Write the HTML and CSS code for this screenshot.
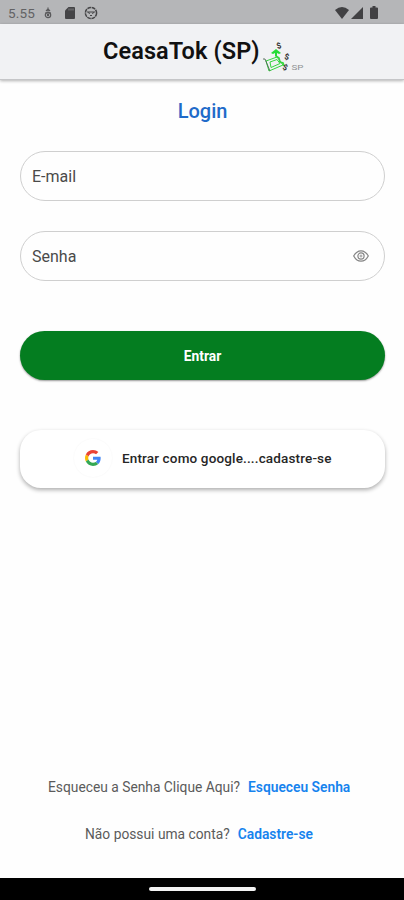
FILE: index.html
```html
<!DOCTYPE html>
<html lang="pt-BR">
<head>
<meta charset="utf-8">
<meta name="viewport" content="width=device-width">
<title>CeasaTok (SP)</title>
<link rel="stylesheet" href="styles.css">
</head>
<body>
<div class="screen">
  <div class="status">
    <span class="time">5.55</span>
    <svg class="s-bug" width="10" height="14" viewBox="0 0 10 14" fill="none" stroke="#59595b" stroke-width="1.2"><path d="M5 1.5v4M3 5l2-2 2 2M2 7h6"/><circle cx="5" cy="9" r="2.7"/><circle cx="5" cy="9" r=".6"/></svg>
    <svg class="s-card" width="10" height="12" viewBox="0 0 10 12"><path fill="#444446" d="M3.5 0H9a1 1 0 0 1 1 1v10a1 1 0 0 1-1 1H1a1 1 0 0 1-1-1V3.500z"/><path stroke="#8a8a8c" stroke-width=".9" d="M4 1.500v2M6 1.500v2M8 1.500v2"/></svg>
    <svg class="s-face" width="14" height="14" viewBox="0 0 14 14" fill="none" stroke="#454547"><circle cx="7" cy="7" r="5.600" stroke-width="1.500" stroke-dasharray="3.700 .7"/><path d="M3 6h8M4.500 6l1 2M9.500 6l-1 2M6 9.500h2"/></svg>
    <svg class="s-wifi" width="14" height="12" viewBox="0 0 14 12"><path fill="#414143" d="M0 3Q7-3 14 3L7 12z"/></svg>
    <svg class="s-signal" width="12" height="12" viewBox="0 0 12 12"><path fill="#414143" d="M12 0v12H0z"/></svg>
    <svg class="s-battery" width="8" height="13" viewBox="0 0 8 13"><path fill="#414143" d="M2.500 0h3v1.500H7q1 0 1 1V12q0 1-1 1H1q-1 0-1-1V2.500q0-1 1-1h1.500z"/></svg>
  </div>
  <header class="header">
    <h1 class="title">CeasaTok (SP)</h1>
    <svg class="logo" width="44" height="34" viewBox="0 0 44 34">
      <g fill="none" stroke="#35d63f" stroke-width="1">
        <path d="M4 20l11-4 6 8-14 6zM8 21l7-2.500 3 4-9 4z"/>
        <path stroke-width="1.600" d="M14 10v5l3 2 1 4 3 1 1 3"/>
      </g>
      <path fill="#25dc36" d="M9 12l5-4 5 4-2 1-2-1v3h-2v-3l-2 1z"/>
      <path fill="none" stroke="#4c6650" stroke-width=".9" d="M1 18l2 0 5 12"/>
      <g class="coins"><text transform="translate(15.500 8) rotate(-18)">$</text><text transform="translate(22 18) rotate(12)">$</text><text transform="translate(20 28) rotate(22)">$</text></g>
      <text class="logo-sp" x="29.500" y="29" textLength="12" lengthAdjust="spacingAndGlyphs">SP</text>
    </svg>
  </header>
  <main class="main">
    <h2 class="login">Login</h2>
    <div class="field"><span>E-mail</span></div>
    <div class="field"><span>Senha</span>
      <svg class="eye" width="16" height="12" viewBox="0 0 16 12" fill="none" stroke="#858585" stroke-width="1.200"><path d="M.7 6Q3.500.8 8 .8T15.300 6Q12.500 11.200 8 11.200T.7 6z"/><circle cx="8" cy="6" r="3.100"/><circle cx="8" cy="6" r="1" stroke-width=".8"/></svg>
    </div>
    <button class="enter">Entrar</button>
    <button class="google">
      <span class="g-wrap"><svg width="16" height="16" viewBox="0 0 48 48"><path fill="#EA4335" d="M24 9.500c3.540 0 6.710 1.220 9.210 3.600l6.850-6.850C35.900 2.380 30.470 0 24 0 14.620 0 6.510 5.380 2.560 13.220l7.980 6.190C12.430 13.720 17.740 9.500 24 9.500z"/><path fill="#4285F4" d="M46.980 24.550c0-1.570-.15-3.090-.38-4.550H24v9.020h12.940c-.58 2.960-2.260 5.480-4.780 7.180l7.730 6c4.510-4.180 7.090-10.360 7.090-17.650z"/><path fill="#FBBC05" d="M10.530 28.590A14.500 14.500 0 0 1 9.770 24c0-1.600.27-3.140.76-4.590l-7.980-6.190A23.900 23.900 0 0 0 0 24c0 3.880.92 7.540 2.560 10.780z"/><path fill="#34A853" d="M24 48c6.480 0 11.930-2.130 15.890-5.810l-7.730-6c-2.150 1.450-4.920 2.300-8.160 2.300-6.260 0-11.570-4.220-13.470-9.910l-7.980 6.190C6.510 42.620 14.620 48 24 48z"/></svg></span>
      <span class="g-text">Entrar como google....cadastre-se</span>
    </button>
    <div class="links">
      <p class="forgot"><span>Esqueceu a Senha Clique Aqui?</span><a>Esqueceu Senha</a></p>
      <p class="signup"><span>Não possui uma conta?</span><a>Cadastre-se</a></p>
    </div>
  </main>
  <div class="nav"><div class="pill"></div></div>
</div>
</body>
</html>
```
FILE: styles.css
```css
* { box-sizing: border-box; }
body, h1, h2, p { margin: 0; }
body { font-family: Roboto, sans-serif; background: #fefefe; color: #4a4a4a; }
.screen { height: 900px; display: flex; flex-direction: column; overflow: hidden; }
svg { display: block; flex: none; }
.status { height: 24px; flex: none; display: flex; align-items: center; padding: 1px 26px 0 8px; background: #b5b6b8; }
.time { width: 35px; font-size: 13.500px; letter-spacing: .2px; color: #626264; }
.s-card { margin-left: 12px; }
.s-face { margin-left: 9px; }
.s-wifi { margin-left: auto; }
.s-signal { margin-left: 2px; }
.s-battery { margin-left: 7px; }
.header { height: 56px; flex: none; display: flex; padding-left: 103px; background: #f1f2f4; border-bottom: 1px solid #c5c6c8; box-shadow: 0 1px 3px rgba(0,0,0,.3); }
.title { width: 159px; white-space: nowrap; font-size: 23.500px; line-height: 55px; font-weight: 600; letter-spacing: .1px; color: #111; }
.logo { margin-top: 17px; }
.coins { font: bold 8px Roboto, sans-serif; fill: #333; }
.logo-sp { font: 8px Roboto, sans-serif; fill: #909294; }
.main { flex: 1; display: flex; flex-direction: column; padding: 0 19px 0 20px; }
.login { margin-top: 18px; height: 26px; line-height: 26px; font-size: 20px; font-weight: 500; text-align: center; color: #1f6ac9; }
.field { height: 50px; margin-top: 27px; padding: 0 15px 0 11px; display: flex; align-items: center; justify-content: space-between; border: 1px solid #cfcfcf; border-radius: 25px; font-size: 16px; }
.field + .field { margin-top: 30px; }
button { border: 0; font-family: inherit; padding: 0; }
.enter { height: 49px; margin-top: 50px; border-radius: 25px; background: #047d20; color: #fff; font-size: 13.800px; font-weight: 700; box-shadow: 0 1px 2px rgba(0,0,0,.4); }
.google { height: 58px; margin-top: 50px; padding: 0 0 2px 54px; display: flex; align-items: center; border-radius: 21px; background: #fff; color: #262626; box-shadow: 0 2px 4px rgba(0,0,0,.32); }
.g-wrap { width: 38px; height: 38px; display: grid; place-items: center; border-radius: 50%; box-shadow: 0 0 2px rgba(0,0,0,.05); }
.g-text { margin-left: 10px; font-size: 13.500px; font-weight: 500; letter-spacing: .15px; white-space: nowrap; }
.links { margin-top: auto; font-size: 13.800px; line-height: 20px; white-space: nowrap; color: #5b5b5b; }
.links p { display: flex; gap: 8px; }
.links a { color: #1683ee; font-weight: 600; }
.forgot { padding-left: 28px; }
.signup { padding-left: 65px; margin: 27px 0 34px; }
.nav { height: 22px; flex: none; background: #000; display: flex; justify-content: center; align-items: center; }
.pill { width: 107px; height: 4px; border-radius: 2px; background: #f3f3f3; }
```
